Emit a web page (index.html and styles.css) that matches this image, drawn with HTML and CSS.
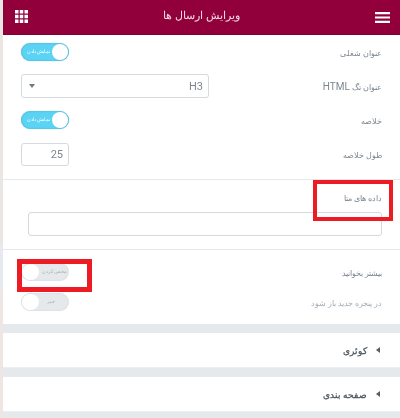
FILE: index.html
```html
<!DOCTYPE html>
<html lang="fa" dir="rtl">
<head>
<meta charset="utf-8">
<title>ویرایش ارسال ها</title>
<link rel="stylesheet" href="styles.css">
</head>
<body>
<div class="strip"></div>
<main class="panel">
  <header class="top">
    <svg class="burger" viewBox="0 0 15 11" width="15" height="11"><path d="M0 0h15v2.2H0zM0 4.4h15v2.2H0zM0 8.8h15V11H0z" fill="#fff"/></svg>
    <h1 class="title">ویرایش ارسال ها</h1>
    <svg class="grid" viewBox="0 0 13 13" width="13" height="13"><path d="M0 0h3.5v3.5H0zM4.75 0h3.5v3.5h-3.5zM9.5 0H13v3.5H9.5zM0 4.75h3.5v3.5H0zM4.75 4.75h3.5v3.5h-3.5zM9.5 4.75H13v3.5H9.5zM0 9.5h3.5V13H0zM4.75 9.5h3.5V13h-3.5zM9.5 9.5H13V13H9.5z" fill="#fff"/></svg>
  </header>

  <section class="group group-first">
    <div class="row row-a">
      <span class="label">عنوان شغلی</span>
      <span class="toggle on"><i class="txt">نمایش دادن</i><i class="knob"></i></span>
    </div>
    <div class="row row-b">
      <span class="label">عنوان تگ <span class="latin">HTML</span></span>
      <span class="select"><span class="val">H3</span><i class="caret"></i></span>
    </div>
    <div class="row row-c">
      <span class="label">خلاصه</span>
      <span class="toggle on"><i class="txt">نمایش دادن</i><i class="knob"></i></span>
    </div>
    <div class="row row-d">
      <span class="label">طول خلاصه</span>
      <span class="num">25</span>
    </div>
  </section>

  <section class="group group-meta">
    <div class="meta-label"><span class="label">داده های متا</span></div>
    <div class="meta-input"></div>
  </section>

  <section class="group group-more">
    <div class="row row-e">
      <span class="label">بیشتر بخوانید</span>
      <span class="toggle off"><i class="txt">مخفی کردن</i><i class="knob"></i></span>
    </div>
    <div class="row row-f">
      <span class="label light">در پنجره جدید باز شود</span>
      <span class="toggle off"><i class="txt">خیر</i><i class="knob"></i></span>
    </div>
  </section>

  <div class="sep sep-1"></div>
  <div class="acc acc-1"><i class="tri"></i><span>کوئری</span></div>
  <div class="sep sep-2"></div>
  <div class="acc acc-2"><i class="tri"></i><span>صفحه بندی</span></div>
  <div class="sep sep-3"></div>
</main>
<div class="mark mark-1"></div>
<div class="mark mark-2"></div>
</body>
</html>
```
FILE: styles.css
```css
* { box-sizing: border-box; }
html, body { margin: 0; padding: 0; height: 418px; overflow: hidden; background: #fff; }
body { display: flex; direction: ltr; font-family: "Roboto", "Noto Sans", "DejaVu Sans", sans-serif; position: relative; filter: blur(0.4px); }
.strip { width: 3px; flex: none; background: linear-gradient(#e9e6e4 0, #e9e6e4 245px, #e6eaf0 245px, #e6eaf0 290px, #efe6e4 290px); }
.panel { flex: 1; direction: rtl; min-width: 0; }

.top { height: 35px; background: #92003b; border-bottom: 1px solid #7c0032; display: flex; align-items: center; justify-content: space-between; padding: 0 10px 1px 12px; }
.burger { flex: none; margin-top: 1px; }
.grid { flex: none; margin-top: -1px; }
.title { margin: -3px 0 0; font-size: 10.5px; font-weight: 400; color: #f3dbe4; font-family: "Noto Sans", sans-serif; }

.group { border-bottom: 1px solid #e6e9ec; padding: 0 18px 0 0; }
.group-first { height: 145px; padding-top: 8px; }
.group-meta { height: 70px; }
.group-more { height: 74px; border-bottom: 0; padding-top: 13px; }

.row { display: flex; justify-content: space-between; align-items: center; padding-left: 18px; }
.row-a { height: 18px; }
.row-b { height: 24px; margin-top: 13px; }
.row-c { height: 18px; margin-top: 13px; }
.row-d { height: 22px; margin-top: 14px; }
.row-f { margin-top: 12px; height: 18px; }
.row-e { height: 18px; }

.label { font-size: 8px; color: #7d8790; white-space: nowrap; font-family: "Noto Sans", sans-serif; line-height: 14px; padding-top: 2px; }
.latin { font-family: "Roboto", sans-serif; font-size: 10px; }
.light { color: #a4afb7; }

.toggle { position: relative; width: 48px; height: 18px; border-radius: 9px; display: block; flex: none; }
.toggle .txt { position: absolute; top: 0; line-height: 17px; font-size: 5px; font-style: normal; white-space: nowrap; font-family: "Noto Sans", sans-serif; }
.knob { position: absolute; top: 1px; width: 16px; height: 16px; border-radius: 50%; background: #fff; }
.on { background: #5bd3f4; box-shadow: inset 0 0 2px rgba(0,0,0,.2), 0 0 1px rgba(80,140,170,.5); }
.on .knob { right: 1px; }
.on .txt { left: 6px; color: #fff; }
.off { background: #e6e9ec; box-shadow: inset 0 0 2px rgba(0,0,0,.1); }
.off .knob { left: 1px; width: 17px; }
.off .txt { right: 2px; color: #a4afb7; }
.row-f .off .txt { right: 14px; }

.select { width: 188px; height: 24px; border: 1px solid #d5dadf; border-radius: 3px; display: flex; justify-content: space-between; align-items: center; padding: 0 5px 0 7px; direction: rtl; background: #fff; }
.val { font-size: 11px; color: #7d8790; }
.caret { width: 0; height: 0; border-left: 3.5px solid transparent; border-right: 3.5px solid transparent; border-top: 4px solid #6d7882; }
.num { width: 48px; height: 23px; margin-top: 1px; border: 1px solid #d5dadf; border-radius: 3px; font-size: 11px; color: #7d8790; display: flex; align-items: center; padding-right: 5px; }

.meta-label { height: 32px; padding-top: 6px; }
.meta-input { width: 354px; height: 24px; margin: 0 0 0 auto; border: 1px solid #d5dadf; border-radius: 3px; margin-left: 25px; margin-right: 0; }

.sep { background: #e6e9ec; }
.sep-1 { height: 9px; }
.sep-2 { height: 9px; }
.sep-3 { height: 6px; }
.acc { display: flex; align-items: center; gap: 9px; padding-right: 20px; font-size: 9px; font-weight: 700; color: #556068; font-family: "Noto Sans", sans-serif; border-bottom: 1px solid #eceff1; }
.acc-1 { height: 35px; }
.acc-2 { height: 35px; }
.tri { width: 0; height: 0; border-top: 3.5px solid transparent; border-bottom: 3.5px solid transparent; border-right: 4px solid #556068; }

.mark { position: absolute; border: 4px solid #ed1c24; background: transparent; }
.mark-1 { left: 313px; top: 180px; width: 80px; height: 41px; }
.mark-2 { left: 17px; top: 259px; width: 75px; height: 33px; border-width: 5px; }
```
